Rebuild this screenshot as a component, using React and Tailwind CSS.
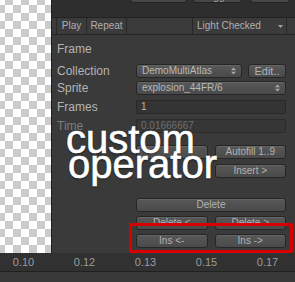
import React from "react";

const btn =
  "h-[14px] rounded-[3px] border border-[#262626] bg-gradient-to-b from-[#585858] to-[#4a4a4a] text-[#b2b2b2] text-[10px] leading-[12px] flex items-center justify-center shadow-[inset_0_1px_0_rgba(255,255,255,0.08)]";

function Arrows() {
  return (
    <svg width="5" height="8" viewBox="0 0 5 8" className="shrink-0">
      <path d="M0 3.2 L2.5 0.5 L5 3.2 Z" fill="#a8a8a8" />
      <path d="M0 4.8 L2.5 7.5 L5 4.8 Z" fill="#a8a8a8" />
    </svg>
  );
}

function Dropdown({ text, className }) {
  return (
    <div className={`${btn} ${className} !justify-between pl-[5px] pr-[5px]`}>
      <span className="text-[#b8b8b8] whitespace-nowrap">{text}</span>
      <Arrows />
    </div>
  );
}

function Label({ children, dim }) {
  return (
    <div
      className={`w-[79px] shrink-0 text-[12px] leading-[14px] ${dim ? "text-[#7c7c7c]" : "text-[#b4b4b4]"}`}
    >
      {children}
    </div>
  );
}

export default function App() {
  return (
    <div className="relative w-[295px] h-[282px] overflow-hidden flex flex-col bg-[#3a3a3a] font-['Liberation_Sans',Arial,sans-serif]">
      <div className="flex h-[253px] shrink-0">
        <div className="w-[51px] shrink-0 bg-[repeating-conic-gradient(#cbcbcb_0_25%,#ffffff_0_50%)] bg-[length:16px_16px] bg-[position:-3px_-3px]" />
        <div className="w-px shrink-0 bg-[#1f1f1f]" />
        <div className="flex-1 flex flex-col min-w-0">
          {/* top strip */}
          <div className="h-[18px] shrink-0 bg-[#2e2e2e] border-b border-[#222] flex items-start">
            <div className="ml-[78px] w-[57px] h-[14px] -mt-[11px] rounded-[3px] border border-[#222] bg-[#474747]" />
            <div className="ml-[6px] w-[49px] h-[14px] -mt-[11px] rounded-[3px] border border-[#222] bg-[#474747] flex items-center justify-center text-[10px] text-[#aaa] overflow-hidden">
              Toggle
            </div>
            <div className="ml-[8px] w-[40px] h-[14px] -mt-[11px] rounded-[3px] border border-[#222] bg-[#474747]" />
          </div>
          {/* toolbar */}
          <div className="h-[17px] shrink-0 bg-[#3b3b3b] border-b border-[#262626] flex text-[10px] text-[#b0b0b0] leading-[16px]">
            <div className="w-[5px] border-r border-[#282828]" />
            <div className="w-[30px] border-r border-[#282828] text-center">Play</div>
            <div className="w-[40px] border-r border-[#282828] text-center">Repeat</div>
            <div className="flex-1" />
            <div className="w-[95px] border-l border-r border-[#282828] flex items-center justify-between pl-[4px] pr-[3px]">
              <span>Light Checked</span>
              <svg width="5" height="3" viewBox="0 0 5 3">
                <path d="M0 0 L5 0 L2.5 3 Z" fill="#a0a0a0" />
              </svg>
            </div>
            <div className="w-[8px]" />
          </div>
          {/* inspector */}
          <div className="flex-1 pl-[5px] pr-[9px] flex flex-col">
            <div className="mt-[6px] h-[16px] text-[12px] leading-[16px] text-[#b4b4b4]">Frame</div>
            <div className="mt-[7px] flex items-center h-[14px]">
              <Label>Collection</Label>
              <Dropdown text="DemoMultiAtlas" className="w-[106px]" />
              <div className={`${btn} ml-[6px] flex-1 text-[11px]`}>Edit..</div>
            </div>
            <div className="mt-[3px] flex items-center h-[14px]">
              <Label>Sprite</Label>
              <Dropdown text="explosion_44FR/6" className="flex-1" />
            </div>
            <div className="mt-[5px] flex items-center h-[14px]">
              <Label>Frames</Label>
              <div className="flex-1 h-[14px] bg-[#343434] border border-[#282828] rounded-[1px] text-[10px] leading-[12px] text-[#b8b8b8] pl-[4px]">
                1
              </div>
            </div>
            <div className="mt-[5px] flex items-center h-[14px]">
              <Label dim>Time</Label>
              <div className="flex-1 h-[14px] bg-[#363636] border border-[#2c2c2c] rounded-[1px] text-[10px] leading-[12px] text-[#6e6e6e] pl-[4px]">
                0.01666667
              </div>
            </div>
            <div className="mt-[12px] ml-[79px] grid grid-cols-2 gap-[7px]">
              <div className={btn} />
              <div className={btn}>Autofill 1..9</div>
            </div>
            <div className="mt-[5px] ml-[79px] grid grid-cols-2 gap-[7px]">
              <div />
              <div className={btn}>Insert &gt;</div>
            </div>
            <div className="mt-[20px] ml-[79px]">
              <div className={btn}>Delete</div>
            </div>
            <div className="mt-[4px] ml-[79px] grid grid-cols-2 gap-[7px]">
              <div className={btn}>Delete &lt;</div>
              <div className={btn}>Delete &gt;</div>
            </div>
            <div className="mt-[4px] ml-[79px] grid grid-cols-2 gap-[7px]">
              <div className={btn}>Ins &lt;-</div>
              <div className={btn}>Ins -&gt;</div>
            </div>
          </div>
        </div>
      </div>
      {/* ruler */}
      <div className="h-[18px] shrink-0 bg-[#313131] flex items-center text-[11px] text-[#9c9c9c] -ml-[7px]">
        {["0.10", "0.12", "0.13", "0.15", "0.17"].map((t) => (
          <div key={t} className="w-[61px] shrink-0 text-center">
            {t}
          </div>
        ))}
      </div>
      <div className="h-px shrink-0 bg-[#202020]" />
      <div className="flex-1 bg-[#383838]" />

      {/* annotation */}
      <div className="absolute left-[66px] top-[127px] text-white text-[40px] leading-[25px] [-webkit-text-stroke:0.6px_white] [text-shadow:0_1px_2px_rgba(0,0,0,0.6)] pointer-events-none">
        <div>custom</div>
        <div className="pl-[2px]">operator</div>
      </div>
      <div className="absolute left-[129px] top-[223px] w-[164px] h-[30px] border-[3px] border-[#d80000] rounded-[2px]" />
    </div>
  );
}
